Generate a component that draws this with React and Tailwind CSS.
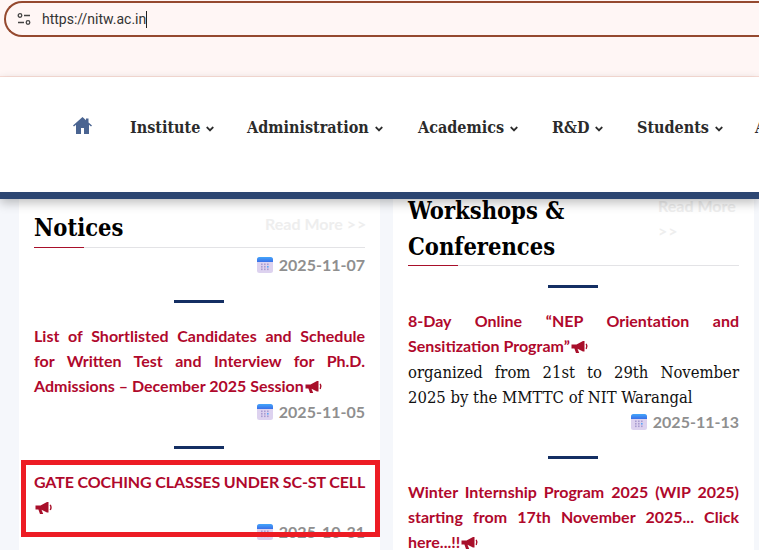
import React from "react";
import { FaAngleDown } from "react-icons/fa";

const serif = "font-['DejaVu_Serif_Condensed','DejaVu_Serif',serif]";

function Calendar() {
  return (
    <svg width="16" height="16" viewBox="0 0 16 16" className="shrink-0">
      <defs>
        <linearGradient id="calTop" x1="0" y1="0" x2="0" y2="1">
          <stop offset="0" stopColor="#43a6fb" />
          <stop offset="1" stopColor="#3b6fe8" />
        </linearGradient>
      </defs>
      <rect x="0" y="0" width="16" height="16" rx="2.5" fill="#ddd2ef" />
      <path d="M0 5V2.5A2.5 2.5 0 0 1 2.5 0h11A2.5 2.5 0 0 1 16 2.5V5z" fill="url(#calTop)" />
      {[4, 7, 10].map((x) =>
        [6.5, 9, 11.5].map((y) => (
          <rect key={`${x}-${y}`} x={x} y={y} width="1.6" height="1.6" fill={x === 10 && y === 9 ? "#5aa5f5" : "#a99cd0"} />
        ))
      )}
    </svg>
  );
}

function DateRow({ children }) {
  return (
    <div className="flex items-center justify-end gap-[6px] h-[24px] text-[16px] font-bold text-[#8f8f8f] leading-none">
      <Calendar />
      <span>{children}</span>
    </div>
  );
}

function Divider({ className }) {
  return <div className={`w-[50px] h-[3px] bg-[#142f63] ml-[140px] ${className}`} />;
}

function Horn() {
  return (
    <svg width="18" height="14" viewBox="0 0 18 14" className="inline-block align-[-2px] ml-px" fill="#a80f2a">
      <path d="M0.5 4.5h5L12 1h1.5v10.5H12L6.5 8.7l1.7 4.3H5L3.4 8.6H0.5z" />
      <path d="M15.2 3.8q1.6 2.6 0 5.2" fill="none" stroke="#a80f2a" strokeWidth="1.4" />
    </svg>
  );
}

function Title({ children, h, moreClass }) {
  return (
    <div className="flex justify-between items-start border-b border-[#e3e3e6] relative">
      <h2 className={`${serif} font-bold text-black text-[23.5px] leading-[36px] w-[230px]`} style={{ height: h }}>{children}</h2>
      <span className={`text-left text-[16px] font-bold text-[#eeeeee] ${moreClass}`}>
        Read More <span className="tracking-[1px]">&gt;&gt;</span>
      </span>
      <div className="absolute left-0 bottom-[-1px] w-[50px] h-px bg-[#a80f2a]" />
    </div>
  );
}

function Link({ children }) {
  return <p className="text-[16px] font-bold leading-[25px] text-[#b0082c] text-justify">{children}</p>;
}

function NavItem({ children, w }) {
  return (
    <div className="flex items-center gap-[4px] shrink-0 text-[#2b2b2b]" style={{ width: w }}>
      <span className={`${serif} font-bold text-[16px] whitespace-nowrap`}>{children}</span>
      <FaAngleDown className="text-[12px] mt-[3px]" />
    </div>
  );
}

export default function App() {
  return (
    <div className="w-[759px] h-[550px] overflow-hidden flex flex-col bg-[#f5f7fb] font-['Lato',sans-serif] relative">
      <div className="h-[77px] shrink-0 bg-[#fff6f5] border-b border-[#fbdfd8] pt-px pl-[4px] overflow-hidden">
        <div className="w-[800px] h-[36px] rounded-l-[18px] border-2 border-r-0 border-[#95492f] flex items-center pl-[11px]">
          <svg width="14" height="14" viewBox="0 0 14 14" fill="none" stroke="#444" strokeWidth="1.3">
            <circle cx="3" cy="3.5" r="1.8" />
            <path d="M7 3.5h6M1 10.5h6" />
            <circle cx="11" cy="10.5" r="1.8" />
          </svg>
          <span className="ml-[11px] text-[14px] font-['Roboto',sans-serif] text-[#333]">https://nitw.ac.in</span>
          <span className="w-px h-[17px] bg-[#222]" />
        </div>
      </div>

      <div className="h-[122px] shrink-0 bg-white border-b-[7px] border-[#2c4672] shadow-[0_4px_10px_rgba(0,0,0,0.25)] relative z-10 flex items-center pl-[73px] pb-[14px] overflow-hidden">
        <svg width="19" height="17" viewBox="0 0 19 17" fill="#4a6491" className="mr-[38px] shrink-0 mb-[4px]">
          <path d="M9.5 0L0 8.5l1 1L3 7.8V17h5v-6h3v6h5V7.8l2 1.7 1-1-3.5-3.1V1.5H13v1.7z" />
        </svg>
        <NavItem w="117px">Institute</NavItem>
        <NavItem w="171px">Administration</NavItem>
        <NavItem w="134px">Academics</NavItem>
        <NavItem w="85px">R&amp;D</NavItem>
        <NavItem w="118px">Students</NavItem>
        <NavItem w="100px">Academic</NavItem>
      </div>

      <div className="flex-1 overflow-hidden px-[19px] grid grid-cols-[361px_361px] gap-x-[13px] items-start">
        <div className="bg-white px-[15px] h-[400px] pt-[11px]">
          <Title h="37px" moreClass="w-[100px] whitespace-nowrap leading-[28px]">Notices</Title>
          <div className="mt-[5px]"><DateRow>2025-11-07</DateRow></div>
          <Divider className="mt-[23px] mb-[20px]" />
          <Link>List of Shortlisted Candidates and Schedule for Written Test and Interview for Ph.D. Admissions – December 2025 Session<Horn /></Link>
          <div className="mt-[2px]"><DateRow>2025-11-05</DateRow></div>
          <Divider className="mt-[22px] mb-[20px]" />
          <p className="text-[16px] font-bold leading-[25px] text-[#b0082c] whitespace-nowrap tracking-[-0.12px]">GATE COCHING CLASSES UNDER SC-ST CELL</p>
          <p className="leading-[25px]"><Horn /></p>
          <div className="mt-[1px]"><DateRow>2025-10-31</DateRow></div>
        </div>
        <div className="bg-white px-[15px] h-[400px] -mt-[6px]">
          <Title h="72px" moreClass="w-[81px] leading-[25px]">Workshops &amp; Conferences</Title>
          <Divider className="mt-[19px] mb-[20px]" />
          <Link>8-Day Online “NEP Orientation and Sensitization Program”<Horn /></Link>
          <p className={`${serif} mt-[2px] text-[16.5px] leading-[25px] text-[#111] text-justify`}>organized from 21st to 29th November 2025 by the MMTTC of NIT Warangal</p>
          <DateRow>2025-11-13</DateRow>
          <Divider className="mt-[22px] mb-[20px]" />
          <Link>Winter Internship Program 2025 (WIP 2025) starting from 17th November 2025... Click here...!!<Horn /></Link>
        </div>
      </div>

      <div className="absolute left-[21px] top-[460px] w-[359px] h-[77px] border-[5px] border-[#ed1c24] z-20 pointer-events-none" />
    </div>
  );
}
